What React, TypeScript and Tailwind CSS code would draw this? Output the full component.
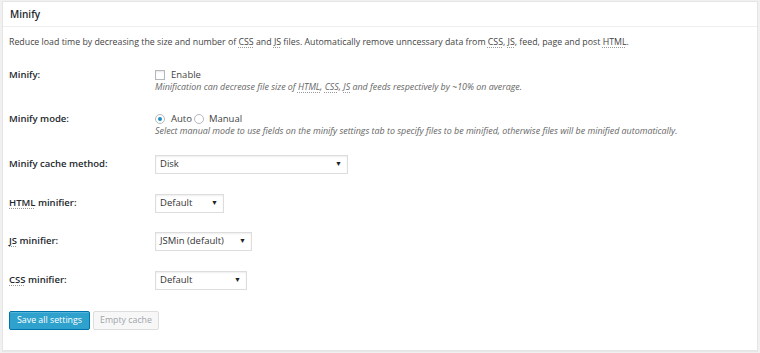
import React from 'react';

const Abbr = ({ children }: { children: React.ReactNode }) => (
  <span className="underline decoration-dotted decoration-[#999] underline-offset-2">{children}</span>
);

const Select = ({ value, width }: { value: string; width: string }) => (
  <div className={`flex h-[19px] items-center justify-between border border-[#ddd] bg-white pl-[4px] pr-[5px] text-[9.5px] text-[#333] shadow-[inset_0_1px_2px_rgba(0,0,0,0.07)] ${width}`}>
    <span>{value}</span>
    <span className="text-[7px] text-[#222]">▼</span>
  </div>
);

const Row = ({ label, children, className = '' }: { label: React.ReactNode; children: React.ReactNode; className?: string }) => (
  <div className={`flex ${className}`}>
    <div className="w-[146px] shrink-0 text-[9.5px] font-semibold text-[#23282d]">{label}</div>
    <div className="flex-1">{children}</div>
  </div>
);

const App = () => {
  return (
    <div className="h-[353px] w-[760px] bg-[#f1f1f1] px-[2px] pt-[1px] font-['Open_Sans',sans-serif]">
      <div className="h-[350px] border border-[#e5e5e5] bg-white shadow-[0_1px_1px_rgba(0,0,0,0.04)]">
        {/* Header */}
        <div className="flex h-[25px] items-center border-b border-[#eee] px-[7px] text-[10px] font-semibold text-[#23282d]">
          Minify
        </div>

        <div className="px-[6px] pt-[9px] text-[9.5px] text-[#444]">
          <p className="text-[8.8px] leading-[13px]">
            Reduce load time by decreasing the size and number of <Abbr>CSS</Abbr> and <Abbr>JS</Abbr> files. Automatically remove unncessary data from <Abbr>CSS</Abbr>, <Abbr>JS</Abbr>, feed, page and post <Abbr>HTML</Abbr>.
          </p>

          <Row label={<div className="leading-[13px]">Minify:</div>} className="mt-[19px]">
            <div className="flex items-center gap-[6px] leading-[13px]">
              <span className="h-[10px] w-[10px] border border-[#b4b9be] bg-white shadow-[inset_0_1px_2px_rgba(0,0,0,0.1)]" />
              <span>Enable</span>
            </div>
            <div className="mt-[-1px] text-[8.9px] italic leading-[13px] text-[#666]">
              Minification can decrease file size of <Abbr>HTML</Abbr>, <Abbr>CSS</Abbr>, <Abbr>JS</Abbr> and feeds respectively by ~10% on average.
            </div>
          </Row>

          <Row label={<div className="leading-[13px]">Minify mode:</div>} className="mt-[19px]">
            <div className="flex items-center leading-[13px]">
              <span className="flex h-[10px] w-[10px] items-center justify-center rounded-full border border-[#b4b9be] bg-white">
                <span className="h-[4px] w-[4px] rounded-full bg-[#1e8cbe]" />
              </span>
              <span className="ml-[6px]">Auto</span>
              <span className="ml-[2px] h-[10px] w-[10px] rounded-full border border-[#b4b9be] bg-white" />
              <span className="ml-[5px]">Manual</span>
            </div>
            <div className="mt-[-1px] text-[8.9px] italic leading-[13px] text-[#666]">
              Select manual mode to use fields on the minify settings tab to specify files to be minified, otherwise files will be minified automatically.
            </div>
          </Row>

          <Row className="mt-[18px] items-center" label="Minify cache method:">
            <Select value="Disk" width="w-[193px]" />
          </Row>

          <Row className="mt-[20px] items-center" label={<><Abbr>HTML</Abbr> minifier:</>}>
            <Select value="Default" width="w-[69px]" />
          </Row>

          <Row className="mt-[19px] items-center" label={<><Abbr>JS</Abbr> minifier:</>}>
            <Select value="JSMin (default)" width="w-[97px]" />
          </Row>

          <Row className="mt-[20px] items-center" label={<><Abbr>CSS</Abbr> minifier:</>}>
            <Select value="Default" width="w-[92px]" />
          </Row>

          <div className="mt-[21px] flex gap-[3px]">
            <button className="h-[19px] w-[81px] rounded-[2px] border border-[#0073aa] bg-[#2ea2cc] text-[8.8px] leading-[17px] text-white shadow-[inset_0_1px_0_rgba(120,200,230,0.5)]">
              Save all settings
            </button>
            <button className="h-[19px] w-[66px] rounded-[2px] border border-[#ddd] bg-[#f7f7f7] text-[8.8px] leading-[17px] text-[#a0a5aa]">
              Empty cache
            </button>
          </div>
        </div>
      </div>
    </div>
  );
};

export default App;
